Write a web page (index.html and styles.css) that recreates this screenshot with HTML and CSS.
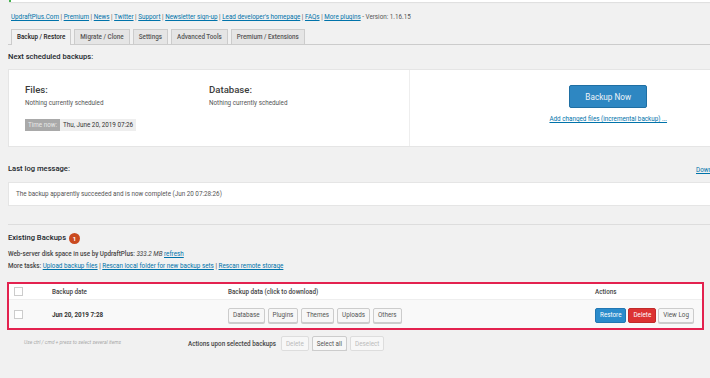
FILE: index.html
```html
<!DOCTYPE html>
<html lang="en">
<head>
  <meta charset="utf-8">
  <title>UpdraftPlus Backup / Restore</title>
  <link rel="stylesheet" href="styles.css">
</head>
<body>
  <div class="wrap">
    <div class="notice"></div>

    <p class="plugin-links">
      <a href="#">UpdraftPlus.Com</a> | <a href="#">Premium</a> | <a href="#">News</a> | <a href="#">Twitter</a> | <a href="#">Support</a> | <a href="#">Newsletter sign-up</a> | <a href="#">Lead developer's homepage</a> | <a href="#">FAQs</a> | <a href="#">More plugins</a> - Version: 1.16.15
    </p>

    <div class="tabs">
      <a class="tab active" href="#">Backup / Restore</a>
      <a class="tab" href="#">Migrate / Clone</a>
      <a class="tab" href="#">Settings</a>
      <a class="tab" href="#">Advanced Tools</a>
      <a class="tab" href="#">Premium / Extensions</a>
    </div>

    <h2 class="section-title">Next scheduled backups:</h2>
    <div class="sched-box">
      <div class="sched-left">
        <div class="sched-cols">
          <div class="sched-col">
            <h3>Files:</h3>
            <p>Nothing currently scheduled</p>
          </div>
          <div class="sched-col">
            <h3>Database:</h3>
            <p>Nothing currently scheduled</p>
          </div>
        </div>
        <div class="time-now"><span class="time-label">Time now:</span><span class="time-value">Thu, June 20, 2019 07:26</span></div>
      </div>
      <div class="sched-right">
        <button class="backup-now">Backup Now</button>
        <a class="incremental" href="#">Add changed files (incremental backup) ...</a>
      </div>
    </div>

    <div class="log-head">
      <h2 class="section-title">Last log message:</h2>
      <a href="#" class="log-download">Download most recent log file</a>
    </div>
    <div class="log-box">The backup apparently succeeded and is now complete (Jun 20 07:28:26)</div>

    <hr class="divider">

    <h2 class="existing">Existing Backups <span class="count">1</span></h2>
    <p class="info disk"><b>Web-server disk space in use by UpdraftPlus:</b> <i>333.2 MB</i> <a href="#">refresh</a></p>
    <p class="info"><b>More tasks:</b> <a href="#">Upload backup files</a> | <a href="#">Rescan local folder for new backup sets</a> | <a href="#">Rescan remote storage</a></p>

    <table class="backups">
      <colgroup>
        <col class="c-check">
        <col class="c-date">
        <col class="c-data">
        <col class="c-actions">
      </colgroup>
      <thead>
        <tr>
          <th><span class="check"></span></th>
          <th>Backup date</th>
          <th>Backup data (click to download)</th>
          <th>Actions</th>
        </tr>
      </thead>
      <tbody>
        <tr>
          <td><span class="check"></span></td>
          <td class="date">Jun 20, 2019 7:28</td>
          <td>
            <div class="btn-row">
              <button class="btn">Database</button>
              <button class="btn">Plugins</button>
              <button class="btn">Themes</button>
              <button class="btn">Uploads</button>
              <button class="btn">Others</button>
            </div>
          </td>
          <td>
            <div class="btn-row tight">
              <button class="btn blue">Restore</button>
              <button class="btn red">Delete</button>
              <button class="btn">View Log</button>
            </div>
          </td>
        </tr>
      </tbody>
    </table>

    <div class="bulk">
      <p class="hint">Use ctrl / cmd + press to select several items</p>
      <span class="bulk-label">Actions upon selected backups</span>
      <button class="btn disabled">Delete</button>
      <button class="btn">Select all</button>
      <button class="btn disabled">Deselect</button>
    </div>
  </div>
</body>
</html>
```

FILE: styles.css
```css
body {
  margin: 0;
  background: #f1f1f1;
  font-family: Roboto, "Open Sans", sans-serif;
  font-size: 6.3px;
  color: #444;
  overflow: hidden;
}

a {
  color: #0073aa;
}

p {
  margin: 0;
}

.wrap {
  width: 800px;
  padding-left: 8px;
}

.notice {
  margin-left: 1px;
  height: 2px;
  background: #fff;
  border-left: 2px solid #46b450;
  box-shadow: 0 1px 1px rgba(0, 0, 0, 0.08);
}

.plugin-links {
  margin: 10px 0 0 3px;
  line-height: 10px;
  color: #555;
}

/* tabs */

.tabs {
  display: flex;
  gap: 3px;
  margin-top: 7px;
  padding-left: 3px;
  border-bottom: 1px solid #ccc;
}

.tab {
  display: block;
  height: 14px;
  line-height: 14px;
  padding: 0 5px;
  margin-bottom: -1px;
  border: 1px solid #ccc;
  border-bottom: none;
  background: #e5e5e5;
  color: #555;
  font-size: 6.3px;
  font-weight: 500;
  text-decoration: none;
}

.tab.active {
  background: #f1f1f1;
  color: #222;
  height: 15px;
}

.section-title {
  margin: 7px 0 0;
  font-size: 7.6px;
  line-height: 10px;
  font-weight: 500;
  color: #23282d;
}

/* next scheduled */

.sched-box {
  display: flex;
  height: 76px;
  margin-top: 7px;
  background: #fff;
  border: 1px solid #e5e5e5;
}

.sched-left {
  width: 384px;
  padding: 14px 0 0 16px;
  border-right: 1px solid #eee;
}

.sched-cols {
  display: flex;
}

.sched-col {
  width: 184px;
}

.sched-col h3 {
  margin: 0;
  font-size: 9.6px;
  line-height: 12px;
  font-weight: 500;
  color: #3c3c3c;
}

.sched-col p {
  margin-top: 2px;
  line-height: 10px;
  color: #555;
}

.time-now {
  display: flex;
  margin-top: 11px;
  height: 12px;
  line-height: 12px;
}

.time-label {
  padding: 0 3px;
  background: #a9a9a9;
  color: #e8e8e8;
}

.time-value {
  padding: 0 3px;
  background: #eee;
  color: #333;
}

.sched-right {
  width: 398px;
  display: flex;
  flex-direction: column;
  align-items: center;
  padding-top: 15px;
}

.backup-now {
  width: 78px;
  height: 23px;
  border: 1px solid #1f6fa3;
  border-radius: 2px;
  background: #2e87c2;
  color: #eef4f9;
  font-family: inherit;
  font-size: 8.2px;
}

.incremental {
  margin-top: 6px;
  line-height: 10px;
}

/* log */

.log-head {
  display: flex;
  align-items: center;
  margin-top: 17px;
}

.log-head .section-title {
  flex: 0 0 688px;
  margin: 0;
}

.log-download {
  padding-top: 2px;
  white-space: nowrap;
}

.log-box {
  margin-top: 8px;
  height: 22px;
  line-height: 22px;
  padding-left: 7px;
  background: #fff;
  border: 1px solid #e5e5e5;
  color: #555;
}

.divider {
  margin: 18px 0 0;
  border: none;
  border-top: 1px solid #ddd;
}

/* existing backups */

.existing {
  display: flex;
  align-items: center;
  gap: 3px;
  margin: 7px 0 0;
  font-size: 7.6px;
  line-height: 12px;
  font-weight: 500;
  color: #23282d;
}

.count {
  display: inline-block;
  width: 11px;
  height: 11px;
  line-height: 11px;
  border-radius: 50%;
  background: #ca4a1f;
  color: #fff;
  font-size: 6px;
  font-weight: 700;
  text-align: center;
}

.info {
  line-height: 12px;
  color: #444;
}

.info.disk {
  margin-top: 4px;
}

.info b {
  font-weight: 500;
}

/* table */

.backups {
  margin: 10px 0 0 -1px;
  width: 697px;
  table-layout: fixed;
  border-collapse: collapse;
  border: 2px solid #e3224f;
}

.c-check {
  width: 44px;
}

.c-date {
  width: 176px;
}

.c-data {
  width: 367px;
}

.backups th {
  height: 15px;
  padding: 0;
  background: #fff;
  border-bottom: 1px solid #eee;
  text-align: left;
  font-weight: 500;
  color: #444;
}

.backups td {
  height: 26px;
  padding: 2px 0 0;
  background: #f9f9f9;
  color: #444;
}

.check {
  display: block;
  width: 7px;
  height: 7px;
  margin-left: 5px;
  background: #fff;
  border: 1px solid #ccc;
}

.backups td .check {
  margin-top: -2px;
}

.backups td.date {
  font-weight: 700;
  color: #333;
}

.btn-row {
  display: flex;
  gap: 3px;
}

.btn-row.tight {
  gap: 2px;
}

.btn {
  height: 15px;
  padding: 0 4px;
  border: 1px solid #ccc;
  border-radius: 2px;
  background: #f7f7f7;
  box-shadow: 0 1px 0 #ccc;
  color: #555;
  font-family: inherit;
  font-size: 6.3px;
}

.btn.blue {
  background: #2b8ccc;
  border-color: #2277b3;
  color: #fff;
  box-shadow: none;
}

.btn.red {
  background: #dc3232;
  border-color: #c22a2a;
  color: #fff;
  box-shadow: none;
}

.btn.disabled {
  color: #bbb;
  border-color: #ddd;
  box-shadow: none;
}

/* bulk actions */

.bulk {
  display: flex;
  align-items: center;
  gap: 3px;
  margin-top: 6px;
}

.hint {
  width: 161px;
  padding-left: 16px;
  margin-top: -4px;
  font-size: 5px;
  font-style: italic;
  color: #aaa;
}

.bulk-label {
  margin-right: 2px;
  font-weight: 500;
  color: #444;
}
```
